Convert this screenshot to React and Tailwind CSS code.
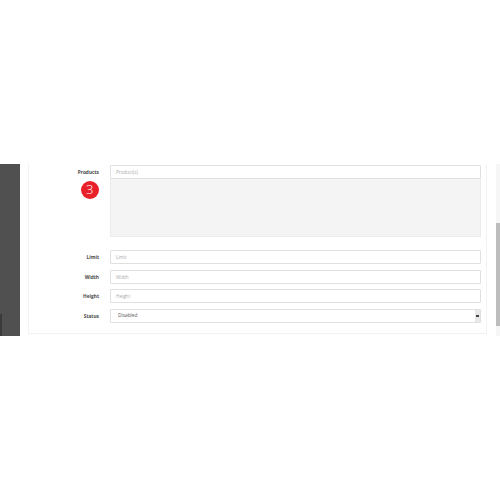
import React from 'react';

const fields = [
  { label: 'Limit', placeholder: 'Limit' },
  { label: 'Width', placeholder: 'Width' },
  { label: 'Height', placeholder: 'Height' },
];

function Label({ children }) {
  return (
    <div className="w-[70px] shrink-0 text-right text-[4.8px] font-bold leading-[14px] text-[#4a4a4a]">
      {children}
    </div>
  );
}

function TextBox({ children }) {
  return (
    <div className="h-[14px] flex-1 rounded-[1px] border border-[#e0e0e0] bg-white pl-[5px] text-[4.6px] leading-[12px] text-[#aaa]">
      {children}
    </div>
  );
}

export default function App() {
  return (
    <div className="h-[500px] w-[500px] overflow-hidden bg-white font-['Open_Sans',sans-serif] antialiased">
      <div className="h-[164px]" />
      <div className="flex h-[172px]">
        {/* Sidebar */}
        <div className="flex w-[20px] shrink-0 flex-col bg-[#505050]">
          <div className="flex-1" />
          <div className="h-[22px] border-l-2 border-[#3a3a3a]" />
        </div>

        {/* Form panel */}
        <div className="ml-[8px] h-[170px] w-[459px] shrink-0 border-x border-b border-[#f2f2f2] pr-[5px]">
          <div className="flex pt-px">
            <Label>Products</Label>
            <div className="ml-[11px] flex-1">
              <TextBox>Product(s)</TextBox>
              <div className="h-[58px] border border-t-0 border-[#ececec] bg-[#f4f4f4]" />
            </div>
          </div>

          <div className="relative">
            <div className="absolute -top-[56px] left-[52px] flex h-[17.5px] w-[17.5px] items-center justify-center rounded-full bg-[#e8202a] text-[13px] leading-none font-light text-white">
              3
            </div>
          </div>

          <div className="mt-[13px] flex flex-col gap-[5.5px]">
            {fields.map((field) => (
              <div key={field.label} className="flex">
                <Label>{field.label}</Label>
                <div className="ml-[11px] flex flex-1">
                  <TextBox>{field.placeholder}</TextBox>
                </div>
              </div>
            ))}

            <div className="flex">
              <Label>Status</Label>
              <div className="ml-[11px] flex h-[14px] flex-1 items-center rounded-[1px] border border-[#e0e0e0] bg-white pl-[7px] text-[4.8px] text-[#555]">
                <span className="flex-1 pt-px">Disabled</span>
                <div className="flex h-full w-[5px] flex-col items-center justify-center bg-[#e8e8e8]">
                  <div className="h-[2px] w-[3px] bg-[#444]" />
                </div>
              </div>
            </div>
          </div>
        </div>

        {/* Scrollbar */}
        <div className="ml-[9px] flex w-[4px] shrink-0 flex-col bg-[#f6f6f6]">
          <div className="h-[59px]" />
          <div className="h-[103px] bg-[#bdbdbd]" />
        </div>
      </div>
    </div>
  );
}
